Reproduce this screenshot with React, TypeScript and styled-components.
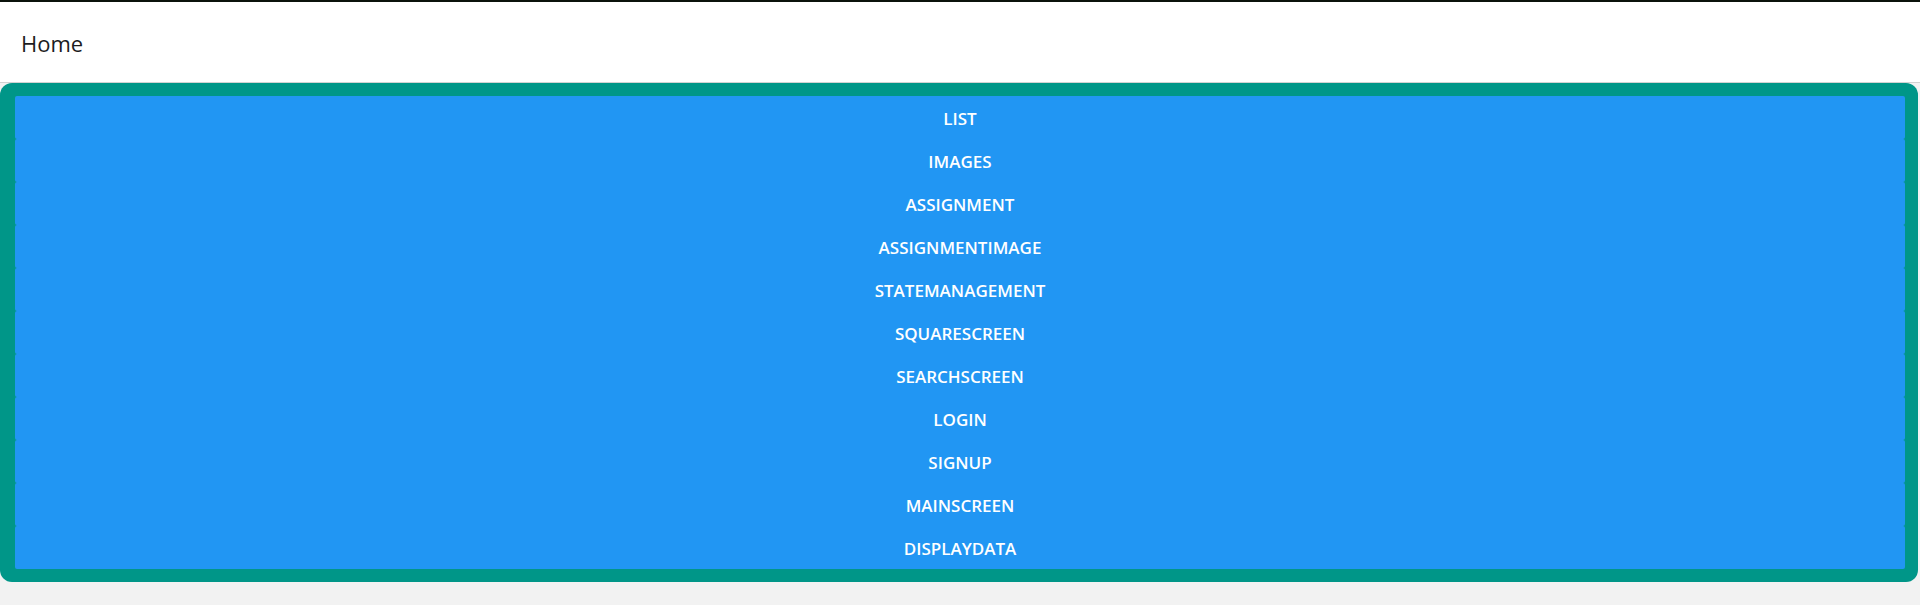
import React from "react";
import styled, { createGlobalStyle } from "styled-components";

const Global = createGlobalStyle`
  html, body { margin: 0; padding: 0; background: #f2f2f2; }
  body { font-family: "Open Sans", "Noto Sans", "Liberation Sans", sans-serif; }
  * { box-sizing: border-box; }
`;

const Page = styled.div`
  display: flex;
  flex-direction: column;
  min-height: 605px;
  background: #f2f2f2;
`;

const TopStrip = styled.div`
  height: 2px;
  background: #0b130c;
`;

const Header = styled.header`
  height: 81px;
  background: #ffffff;
  border-bottom: 1px solid #d2d2d2;
  display: flex;
  align-items: center;
  padding-left: 21px;
`;

const Title = styled.h1`
  margin: 0;
  font-size: 22px;
  font-weight: 500;
  color: #1c1c1e;
  letter-spacing: 0;
  padding-top: 2px;
`;

const Panel = styled.main`
  margin-right: 2px;
  background: #009688;
  border-radius: 12px;
  padding: 13px 13px 13px 15px;
  display: flex;
  flex-direction: column;
`;

const NavButton = styled.button`
  height: 43px;
  border: none;
  border-radius: 2px;
  background: #2196f3;
  color: #ffffff;
  font-family: "Open Sans", "Noto Sans", sans-serif;
  font-size: 17px;
  font-weight: 600;
  text-transform: uppercase;
  display: flex;
  align-items: center;
  justify-content: center;
  padding: 1px 0 0;
  cursor: pointer;
`;

const screens = [
  "List",
  "Images",
  "Assignment",
  "AssignmentImage",
  "StateManagement",
  "SquareScreen",
  "SearchScreen",
  "Login",
  "Signup",
  "MainScreen",
  "DisplayData",
];

export default function App() {
  return (
    <>
      <Global />
      <Page>
        <TopStrip />
        <Header>
          <Title>Home</Title>
        </Header>
        <Panel>
          {screens.map((s) => (
            <NavButton key={s}>{s}</NavButton>
          ))}
        </Panel>
      </Page>
    </>
  );
}
